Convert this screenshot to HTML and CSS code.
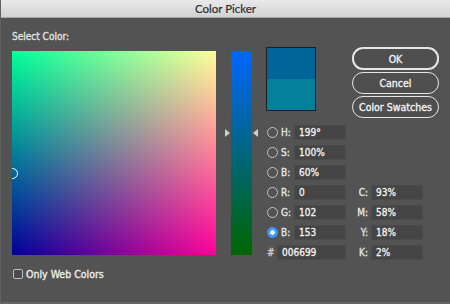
FILE: index.html
```html
<!DOCTYPE html>
<html lang="en">
<head>
    <meta charset="UTF-8">
    <meta name="viewport" content="width=device-width, initial-scale=1.0">
    <title>Color Picker</title>
    <link rel="stylesheet" href="styles.css">
</head>
<body>
    <div class="dialog">
        <div class="titlebar">Color Picker</div>
        <div class="content">
            <div class="picker">
                <div class="caption">Select Color:</div>
                <div class="pick-row">
                    <div class="field">
                        <span class="field-marker" style="left: 0%; top: 60%;"></span>
                    </div>
                    <div class="slider-wrap">
                        <div class="slider"></div>
                        <span class="arrow arrow-left" style="top: 40%;"></span>
                        <span class="arrow arrow-right" style="top: 40%;"></span>
                    </div>
                </div>
                <label class="check">
                    <span class="checkbox"></span>
                    Only Web Colors
                </label>
            </div>

            <div class="side">
                <div class="side-top">
                    <div class="swatch">
                        <div class="swatch-new"></div>
                        <div class="swatch-old"></div>
                    </div>
                    <div class="buttons">
                        <button type="button" class="btn btn-default">OK</button>
                        <button type="button" class="btn">Cancel</button>
                        <button type="button" class="btn">Color Swatches</button>
                    </div>
                </div>

                <div class="values">
                    <span class="radio"></span><span class="lbl">H:</span><span class="input">199°</span>
                    <span></span><span></span>

                    <span class="radio"></span><span class="lbl">S:</span><span class="input">100%</span>
                    <span></span><span></span>

                    <span class="radio"></span><span class="lbl">B:</span><span class="input">60%</span>
                    <span></span><span></span>

                    <span class="radio"></span><span class="lbl">R:</span><span class="input">0</span>
                    <span class="lbl-right">C:</span><span class="input">93%</span>

                    <span class="radio"></span><span class="lbl">G:</span><span class="input">102</span>
                    <span class="lbl-right">M:</span><span class="input">58%</span>

                    <span class="radio radio-on"></span><span class="lbl">B:</span><span class="input">153</span>
                    <span class="lbl-right">Y:</span><span class="input">18%</span>

                    <span class="hash">#</span><span class="input input-hex">006699</span>
                    <span class="lbl-right">K:</span><span class="input">2%</span>
                </div>
            </div>
        </div>
    </div>
</body>
</html>
```

FILE: styles.css
```css
body {
    margin: 0;
    font-family: "DejaVu Sans Condensed", "DejaVu Sans", sans-serif;
    font-stretch: condensed;
    background-color: #535353;
}
.dialog {
    width: 450px;
    height: 304px;
    box-sizing: border-box;
    background-color: #535353;
    border-left: 1px solid #626262;
    border-bottom: 2px solid #666;
    color: #ececec;
    font-size: 10px;
    -webkit-text-stroke: 0.3px;
}
.titlebar {
    height: 17px;
    line-height: 17px;
    text-align: center;
    font-family: Lato, sans-serif;
    font-stretch: normal;
    font-size: 11.5px;
    color: #2e2e2e;
    -webkit-text-stroke: 0.2px;
    background: linear-gradient(#e9e9e9, #d2d2d2);
    border-bottom: 1px solid #a8a8a8;
}
.content {
    display: flex;
    padding-left: 11px;
}
.caption {
    margin-top: 13px;
    height: 20px;
    color: #e4e4e4;
}
.pick-row {
    display: flex;
    gap: 15px;
}
.field {
    position: relative;
    width: 204px;
    height: 204px;
    overflow: hidden;
    background-color: #000099;
    background-image:
        linear-gradient(to right, #000000, #ff0000),
        linear-gradient(to bottom, #00ff00, #000000);
    background-blend-mode: screen;
}
.field-marker {
    position: absolute;
    width: 9px;
    height: 9px;
    margin: -5px 0 0 -5px;
    border: 1px solid #fff;
    border-radius: 50%;
}
.slider-wrap {
    position: relative;
    width: 21px;
    height: 204px;
}
.slider {
    width: 21px;
    height: 204px;
    background: linear-gradient(#0066ff, #006600);
}
.arrow {
    position: absolute;
    width: 0;
    height: 0;
    margin-top: -4px;
    border-top: 4px solid transparent;
    border-bottom: 4px solid transparent;
}
.arrow-left {
    left: -6px;
    border-left: 5px solid #cfcfcf;
}
.arrow-right {
    right: -6px;
    border-right: 5px solid #cfcfcf;
}
.check {
    display: flex;
    align-items: center;
    gap: 3px;
    margin-top: 13px;
    margin-left: 1px;
    font-size: 10.5px;
    color: #f0f0f0;
}
.checkbox {
    width: 8px;
    height: 8px;
    border: 1px solid #bdbdbd;
    border-radius: 2px;
    background-color: #4a4a4a;
}
.side {
    margin-left: 14px;
    padding-top: 29px;
}
.side-top {
    display: flex;
    align-items: flex-start;
}
.swatch {
    width: 48px;
    height: 62px;
    border: 1px solid #1f1f1f;
    display: flex;
    flex-direction: column;
}
.swatch-new {
    flex: 1;
    background-color: #006699;
}
.swatch-old {
    flex: 1;
    background-color: #05809a;
}
.buttons {
    display: flex;
    flex-direction: column;
    gap: 2px;
    margin-left: 36px;
}
.btn {
    width: 87px;
    height: 22px;
    padding: 0;
    border: 1.5px solid #e6e6e6;
    border-radius: 11px;
    background-color: #4f4f4f;
    color: #f4f4f4;
    font-family: "DejaVu Sans Condensed", "DejaVu Sans", sans-serif;
    font-stretch: condensed;
    font-size: 10.5px;
    -webkit-text-stroke: 0.3px;
}
.btn-default {
    height: 23px;
    border-width: 2px;
}
.values {
    display: grid;
    grid-template-columns: 10px 17px 52px 25px 52px;
    grid-auto-rows: 15px;
    row-gap: 5px;
    align-items: center;
    margin-top: 7px;
    margin-left: 1px;
}
.radio {
    width: 9px;
    height: 9px;
    border: 1px solid #c4c4c4;
    border-radius: 50%;
}
.radio-on {
    border-color: #3c9bff;
    background: radial-gradient(circle, #ffffff 0 2px, #3c9bff 2.5px);
}
.lbl {
    padding-left: 4px;
    color: #e8e8e8;
}
.lbl-right {
    text-align: right;
    padding-right: 3px;
    color: #e8e8e8;
}
.hash {
    color: #cfcfcf;
}
.input {
    height: 15px;
    box-sizing: border-box;
    padding-left: 4px;
    background-color: #454545;
    border: 1px solid #4b4b4b;
    border-radius: 1px;
    color: #f2f2f2;
    line-height: 13px;
}
.input-hex {
    grid-column: 2 / 4;
}
```
